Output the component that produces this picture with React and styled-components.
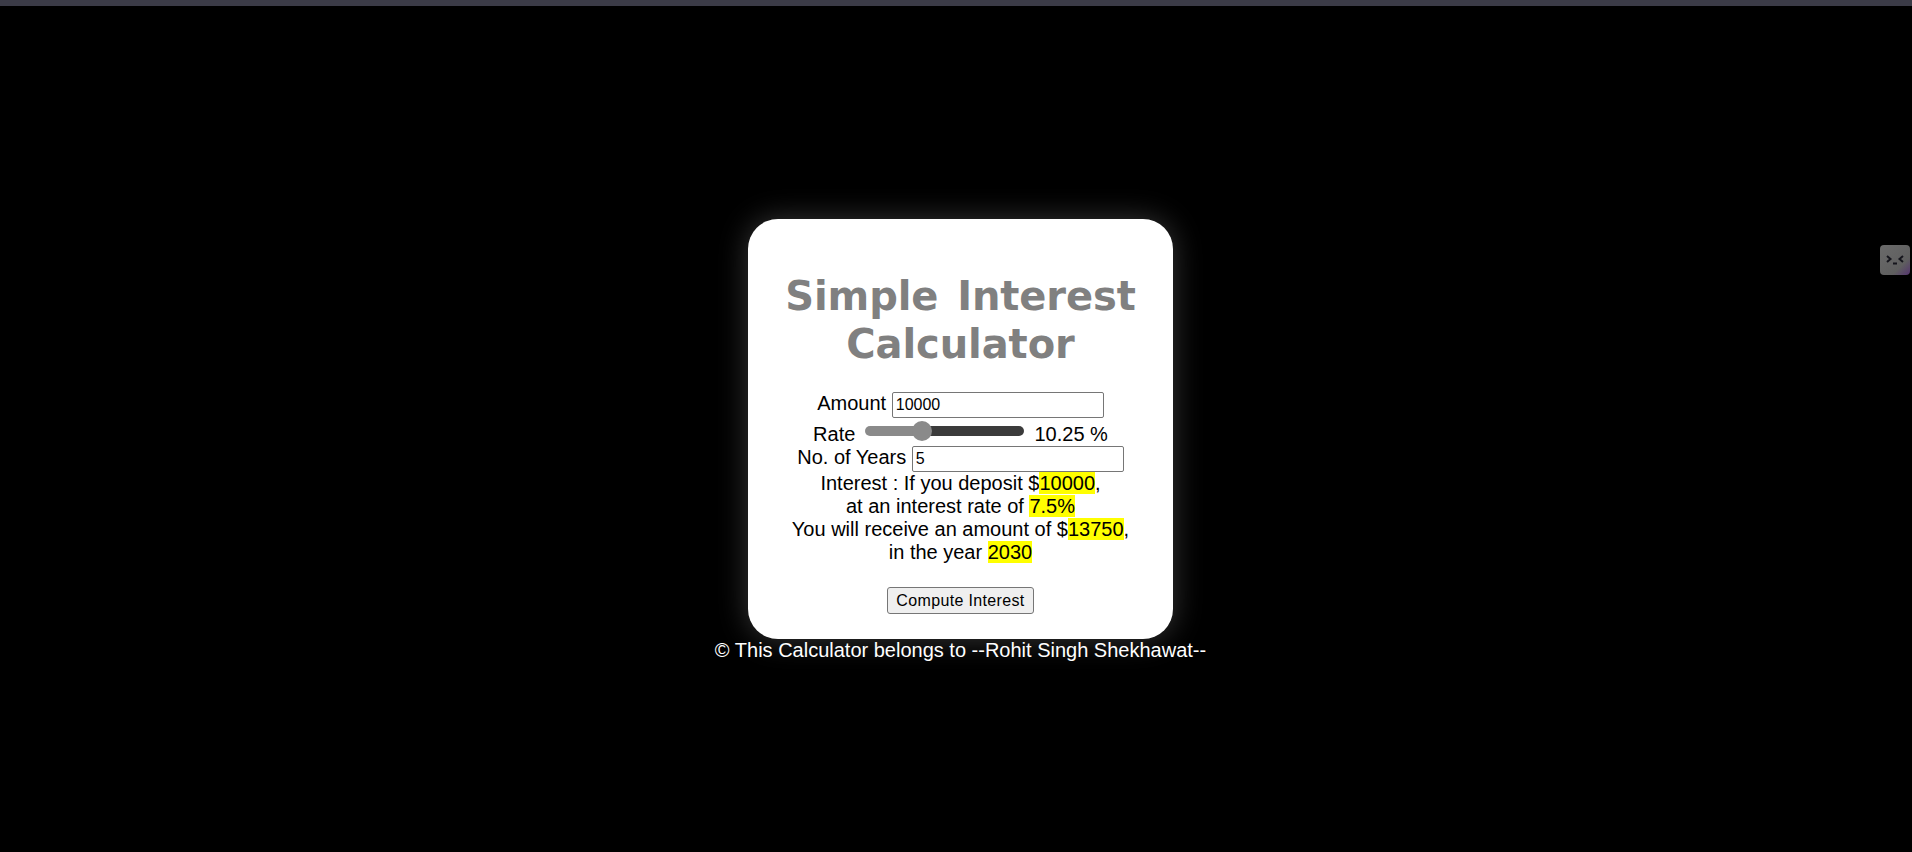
import React, { useState } from 'react';
import styled, { createGlobalStyle } from 'styled-components';

const Global = createGlobalStyle`
  html, body { margin: 0; padding: 0; background: #000; }
  body { font-family: "Liberation Sans", Arial, sans-serif; }
`;

const Page = styled.div`
  position: relative;
  min-height: 852px;
  overflow: hidden;
  background: #000;
  text-align: center;
`;

const TopBar = styled.div`
  height: 6px;
  background: #3b3b47;
`;

const Main = styled.main`
  display: flex;
  flex-direction: column;
  align-items: center;
  padding: 213px 0 0 9px;
`;

const Card = styled.div`
  box-sizing: border-box;
  width: 425px;
  height: 420px;
  padding: 20px 20px 0;
  background: #fff;
  border-radius: 30px;
  box-shadow: 0 0 30px rgba(255, 255, 255, 0.22);
  font-size: 20px;
  line-height: 23px;
  color: #000;
`;

const Title = styled.h1`
  margin: 33px 0 24px;
  font-family: "DejaVu Sans", Verdana, sans-serif;
  font-size: 40px;
  line-height: 48px;
  font-weight: 700;
  letter-spacing: -0.1px;
  word-spacing: 5px;
  color: #808080;
`;

const Row = styled.div`
  display: block;
  margin-bottom: ${(props) => props.$gap || 0}px;
`;

const TextBox = styled.input`
  box-sizing: border-box;
  width: 212px;
  height: 26px;
  padding: 1px 3px;
  border: 1px solid #767676;
  border-radius: 2px;
  font-family: "Liberation Sans", Arial, sans-serif;
  font-size: 16px;
  vertical-align: baseline;
`;

const Slider = styled.input`
  appearance: none;
  width: 159px;
  height: 20px;
  margin: 2px 5px 2px 4px;
  background: transparent;
  &::-webkit-slider-runnable-track {
    height: 10px;
    border-radius: 5px;
    background: linear-gradient(to right, #8a8a8a 36%, #3b3b3b 36%);
  }
  &::-webkit-slider-thumb {
    appearance: none;
    width: 20px;
    height: 20px;
    margin-top: -5px;
    border-radius: 50%;
    background: #8a8a8a;
  }
`;

const Mark = styled.mark`
  background: #ff0;
  color: #000;
`;

const Compute = styled.button`
  box-sizing: border-box;
  height: 27px;
  margin-top: 23px;
  padding: 1px 8px;
  border: 1px solid #767676;
  border-radius: 3px;
  background: #efefef;
  font-family: "Liberation Sans", Arial, sans-serif;
  font-size: 16px;
  letter-spacing: 0.35px;
  color: #000;
`;

const Footer = styled.div`
  font-size: 20px;
  line-height: 23px;
  color: #fff;
`;

const Widget = styled.div`
  position: absolute;
  top: 245px;
  right: 2px;
  width: 30px;
  height: 30px;
  border-radius: 4px;
  background: linear-gradient(135deg, #6a6a6a 0%, #5f5f5f 70%, #55356f 100%);
  display: flex;
  align-items: center;
  justify-content: center;
`;

export default function App() {
  const [amount, setAmount] = useState('10000');
  const [years, setYears] = useState('5');
  return (
    <Page>
      <Global />
      <TopBar />
      <Main>
        <Card>
          <Title>Simple Interest Calculator</Title>
          <Row $gap={1}>
            Amount <TextBox value={amount} onChange={(e) => setAmount(e.target.value)} />
          </Row>
          <Row>
            Rate <Slider type="range" min="1" max="20" step="0.25" defaultValue="7.5" /> 10.25 %
          </Row>
          <Row>
            No. of Years <TextBox value={years} onChange={(e) => setYears(e.target.value)} />
          </Row>
          <Row>Interest : If you deposit $<Mark>10000</Mark>,</Row>
          <Row>at an interest rate of <Mark>7.5%</Mark></Row>
          <Row>You will receive an amount of $<Mark>13750</Mark>,</Row>
          <Row>in the year <Mark>2030</Mark></Row>
          <Compute>Compute Interest</Compute>
        </Card>
        <Footer>© This Calculator belongs to --Rohit Singh Shekhawat--</Footer>
      </Main>
      <Widget>
        <svg width="18" height="10" viewBox="0 0 18 10" fill="none" stroke="#15151c" strokeWidth="2">
          <path d="M1 1 L4.5 4 L1 7" />
          <path d="M17 1 L13.5 4 L17 7" />
          <path d="M7 8.5 H11" />
        </svg>
      </Widget>
    </Page>
  );
}
